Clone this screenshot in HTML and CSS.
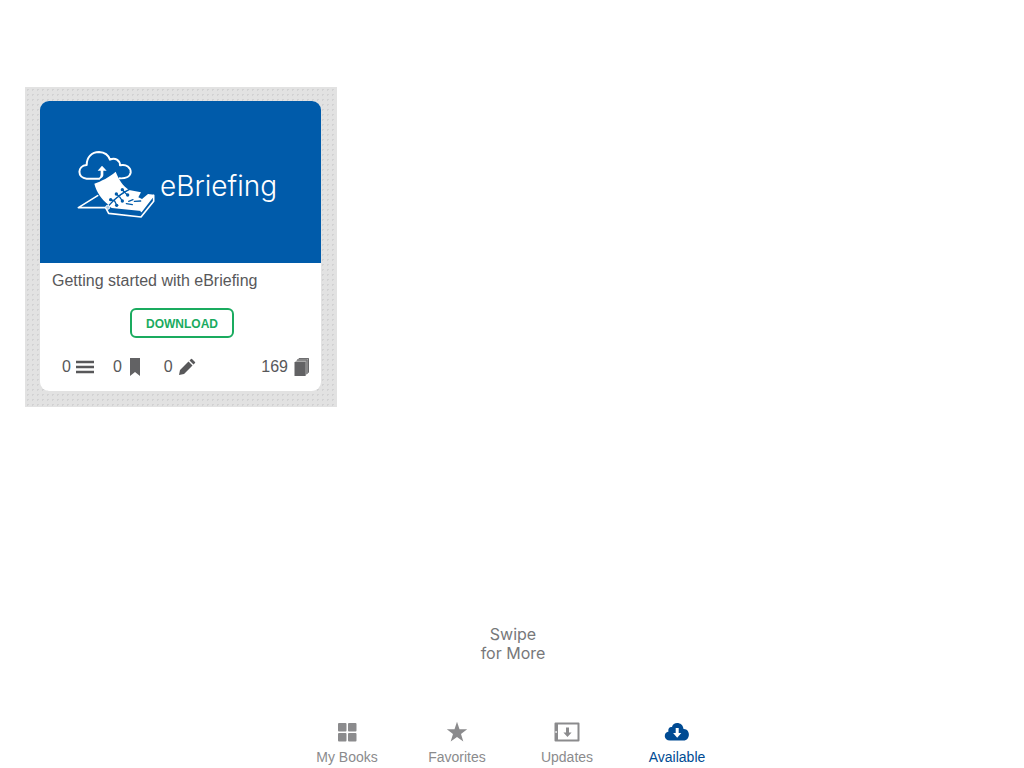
FILE: index.html
```html
<!DOCTYPE html>
<html lang="en">
<head>
<meta charset="utf-8">
<meta name="viewport" content="width=device-width, initial-scale=1">
<title>eBriefing</title>
<link rel="stylesheet" href="styles.css">
</head>
<body>
<main class="library">
  <div class="tile">
    <article class="book">
      <div class="cover">
        <svg class="logo" viewBox="15 24 246 216" aria-hidden="true">
          <g fill="none" stroke="#fff" stroke-width="6" stroke-linejoin="round" stroke-linecap="round">
            <path d="M84 116H47C18 114 18 77 47 75C47 52 62 36 84 36C101 37 113 47 117 59C132 51 147 61 147 76C166 71 180 83 179 98C177 110 163 116 146 115"/>
            <path stroke-width="5" d="M80 167L22 203H108"/>
            <path stroke-width="5" d="M105 205L113 220L210 231L248 184V166L211 214"/>
          </g>
          <path fill="#fff" d="M93 77L107 92H97V106Q96 113 84 119V114Q89 110 89 104V92H80Z"/>
          <path fill="#fff" d="M70 131C90 124 116 111 134 95C143 118 155 137 174 150C150 160 130 177 113 195C91 177 77 157 70 131Z"/>
          <path fill="#fff" d="M174 150L210 157L202 172L213 177L231 162L249 164L211 213L122 204L110 195L131 178Z"/>
          <g fill="none" stroke="#005baa" stroke-width="4" stroke-linecap="round">
            <path d="M114 196C130 178 150 160 174 149M119 179L131 183L137 196M136 162L146 171L154 183M154 149L162 158L170 166M166 191L184 194M173 184L186 179M190 184L209 183"/>
          </g>
          <g fill="#005baa"><circle cx="119" cy="179" r="5"/><circle cx="137" cy="196" r="5"/><circle cx="136" cy="162" r="5"/><circle cx="154" cy="183" r="5"/><circle cx="154" cy="149" r="5"/><circle cx="170" cy="165" r="5"/></g>
          <circle cx="110" cy="202" r="6" fill="#a9cae6" stroke="#fff" stroke-width="3"/>
        </svg>
        <span class="wordmark">eBriefing</span>
      </div>
      <h1 class="title">Getting started with eBriefing</h1>
      <button class="download" type="button">DOWNLOAD</button>
      <div class="stats">
        <span class="stat">0 <svg width="18" height="18" viewBox="0 0 18 18"><path d="M0 4h18M0 9h18M0 14h18" stroke="#58585a" stroke-width="2.300"/></svg></span>
        <span class="stat">0 <svg width="18" height="18" viewBox="0 0 18 18"><path d="M3 0h10v18l-5-4-5 4z" fill="#626264"/></svg></span>
        <span class="stat">0 <svg width="18" height="18" viewBox="0 0 18 18"><path d="M1 17l1-5L10.500 3.500l4 4L6 16zM11.500 2.500l1.500-1.500q.5-.5 1 0l3 3q.5.500 0 1l-1.500 1.500z" fill="#58585a"/></svg></span>
        <span class="stat pages">169 <svg width="18" height="18" viewBox="0 0 18 18"><path d="M2 4l4-4h10v14l-4 4z" fill="#aaa"/><path d="M4 2h10v14M6 .6h9.500v14" fill="none" stroke="#68686a"/><path d="M1.500 4H12.500V18H1.500z" fill="#626264"/></svg></span>
      </div>
    </article>
  </div>
</main>
<p class="hint">Swipe<br>for More</p>
<nav class="tabs">
  <a class="tab" href="#books"><svg width="28" height="22" viewBox="0 0 28 22"><g fill="currentColor"><rect x="5" y="2" width="8.500" height="8.500" rx="1"/><rect x="15" y="2" width="8.500" height="8.500" rx="1"/><rect x="5" y="12" width="8.500" height="8.500" rx="1"/><rect x="15" y="12" width="8.500" height="8.500" rx="1"/></g></svg>My Books</a>
  <a class="tab" href="#favorites"><svg width="28" height="22" viewBox="0 0 28 22"><path fill="currentColor" d="M14 .8l2.500 7.400h7.700l-6.200 4.700 2.300 7.600-6.300-4.600-6.300 4.600 2.300-7.600-6.200-4.700h7.700z"/></svg>Favorites</a>
  <a class="tab" href="#updates"><svg width="28" height="22" viewBox="0 0 28 22"><path fill="currentColor" fill-rule="evenodd" d="M2.500 1.500h23q1 0 1 1v17q0 1-1 1h-23q-1 0-1-1v-17q0-1 1-1zM5 3.500v15h19.500v-15zM2.500 10v2h1.200v-2z"/><path fill="currentColor" d="M13 6.500h3v5h2.600L14.500 16l-4.100-4.500h2.600z"/></svg>Updates</a>
  <a class="tab active" href="#available" aria-current="page"><svg width="28" height="22" viewBox="0 0 28 22"><path fill="currentColor" d="M7 19.500C.5 19.500.2 11.500 5.500 10.500 4.500 6.500 8 5.500 9 6 10 0 20 .5 20.500 8c7-.5 7.500 11.500 0 11.500z"/><path fill="#fff" d="M12.700 7h3v5h2.600l-4.100 4.800L10.100 12h2.600z"/></svg>Available</a>
</nav>
</body>
</html>
```
FILE: styles.css
```css
* { box-sizing: border-box; }
body {
  margin: 0;
  min-height: 100vh;
  display: flex;
  flex-direction: column;
  background: #fff;
  color: #58585a;
  font-family: "Liberation Sans", Arial, sans-serif;
}
svg { display: block; flex: none; }
.library { flex: 1; padding: 87px 25px 0; }
.tile {
  width: 100%;
  max-width: 312px;
  padding: 14px 16px 16px 15px;
  background: radial-gradient(circle, #d2d2d3 1px, transparent 1px) 0 0 / 5px 5px #e2e2e2;
}
.book { overflow: hidden; border-radius: 9px; background: #fff; }
.cover {
  display: flex;
  align-items: center;
  justify-content: center;
  gap: 2px;
  padding: 47px 8px 43px 0;
  background: #005baa;
  color: #fff;
}
.logo { width: 82px; height: 72px; }
.wordmark { padding-top: 4px; font: 300 28px/36px Inter, sans-serif; }
.title { margin: 0; padding: 8px 12px 0; font-size: 16px; line-height: 20px; font-weight: 400; }
.download {
  display: block;
  width: 104px;
  height: 30px;
  margin: 17px auto 0 90px;
  padding: 1px 0 0;
  border: 2px solid #1aab5f;
  border-radius: 6px;
  background: #fff;
  color: #1aab5f;
  font: 700 12px/16px "Liberation Sans", Arial, sans-serif;
}
.stats { display: flex; gap: 19px; padding: 20px 10px 15px 22px; font-size: 16px; line-height: 18px; }
.stat { display: flex; align-items: center; gap: 5px; }
.pages { margin-left: auto; }
.hint { margin: 0 0 58px; padding-left: 2px; text-align: center; color: #77787a; font: 400 16px/19px Inter, sans-serif; }
.tabs { display: flex; justify-content: center; padding-bottom: 2px; }
.tab {
  display: flex;
  flex-direction: column;
  align-items: center;
  gap: 5px;
  width: 110px;
  color: #8b8b8d;
  font-size: 14px;
  line-height: 18px;
  text-decoration: none;
}
.active { color: #004b93; }
```
